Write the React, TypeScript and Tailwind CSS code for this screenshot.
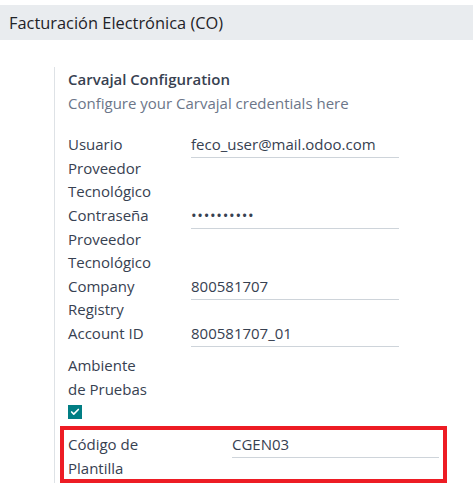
import { Check } from 'lucide-react';

type Field = {
  label: string[];
  value: string;
  secret?: boolean;
};

const fields: Field[] = [
  { label: ['Usuario', 'Proveedor', 'Tecnológico'], value: 'feco_user@mail.odoo.com' },
  { label: ['Contraseña', 'Proveedor', 'Tecnológico'], value: '••••••••••', secret: true },
  { label: ['Company', 'Registry'], value: '800581707' },
  { label: ['Account ID'], value: '800581707_01' },
];

function Label({ lines }: { lines: string[] }) {
  return (
    <div className="whitespace-nowrap">
      {lines.map((l, i) => (
        <div key={i}>{l}</div>
      ))}
    </div>
  );
}

export default function App() {
  return (
    <div className="w-[473px] h-[491px] bg-white pt-[5px] text-[15px] leading-[23.6px] text-[#374151] font-['Open_Sans',sans-serif]">
      <div className="h-[35px] bg-[#e9ecef] flex items-center pl-[9px] text-[16.4px] font-medium text-[#1f2328]">
        Facturación Electrónica (CO)
      </div>

      <div className="ml-[54px] mt-[27px] border-l border-[#dee2e6] pl-[13px] pt-[1px] w-[400px]">
        <div className="font-semibold text-[#374151]">Carvajal Configuration</div>
        <div className="text-[#6c7689]">Configure your Carvajal credentials here</div>

        <div className="mt-[18px]">
          {fields.map((f) => (
            <div key={f.value} className="flex">
              <div className="w-[123px] shrink-0">
                <Label lines={f.label} />
              </div>
              <div
                className={
                  f.secret
                    ? 'w-[208px] h-[25px] mb-[7px] border-b border-[#ced4da] text-[#374151] tracking-[0.7px]'
                    : 'w-[208px] h-[25px] mb-[7px] border-b border-[#ced4da] text-[#374151]'
                }
              >
                {f.value}
              </div>
            </div>
          ))}

          <div>
            <Label lines={['Ambiente', 'de Pruebas']} />
            <div className="mt-[4px] w-[14px] h-[14px] bg-[#017e84] flex items-center justify-center">
              <Check className="w-[10px] h-[10px] text-white" strokeWidth={4} />
            </div>
          </div>

          <div className="-ml-[8px] mt-[7px] -mb-[5px] w-[387px] h-[57px] border-[4px] border-[#ed1c24] px-[4px] pt-[3px] flex">
            <div className="w-[164px] shrink-0">
              <Label lines={['Código de', 'Plantilla']} />
            </div>
            <div className="w-[207px] h-[25px] border-b border-[#ced4da]">CGEN03</div>
          </div>
        </div>
      </div>
    </div>
  );
}
